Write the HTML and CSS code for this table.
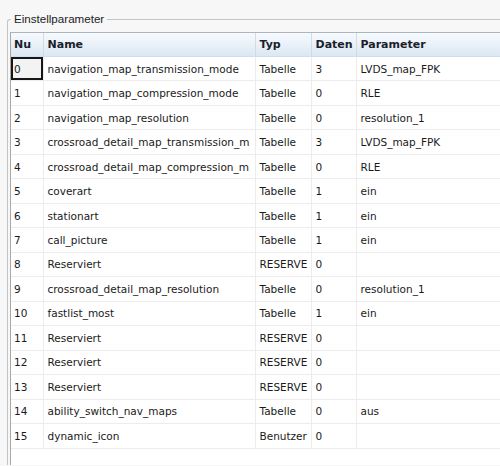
FILE: index.html
```html
<!DOCTYPE html>
<html lang="de">
<head>
<meta charset="utf-8">
<title>Einstellparameter</title>
<link rel="stylesheet" href="styles.css">
</head>
<body>
<fieldset class="group">
  <legend class="group-label">Einstellparameter</legend>
  <div class="grid">
    <table class="param-table">
      <colgroup>
        <col class="c-nu"><col class="c-name"><col class="c-typ"><col class="c-daten"><col class="c-param">
      </colgroup>
      <thead>
        <tr><th class="nu">Nu</th><th>Name</th><th>Typ</th><th>Daten</th><th>Parameter</th></tr>
      </thead>
      <tbody>
        <tr><td class="nu focus">0</td><td>navigation_map_transmission_mode</td><td>Tabelle</td><td>3</td><td>LVDS_map_FPK</td></tr>
        <tr><td class="nu">1</td><td>navigation_map_compression_mode</td><td>Tabelle</td><td>0</td><td>RLE</td></tr>
        <tr><td class="nu">2</td><td>navigation_map_resolution</td><td>Tabelle</td><td>0</td><td>resolution_1</td></tr>
        <tr><td class="nu">3</td><td>crossroad_detail_map_transmission_m</td><td>Tabelle</td><td>3</td><td>LVDS_map_FPK</td></tr>
        <tr><td class="nu">4</td><td>crossroad_detail_map_compression_m</td><td>Tabelle</td><td>0</td><td>RLE</td></tr>
        <tr><td class="nu">5</td><td>coverart</td><td>Tabelle</td><td>1</td><td>ein</td></tr>
        <tr><td class="nu">6</td><td>stationart</td><td>Tabelle</td><td>1</td><td>ein</td></tr>
        <tr><td class="nu">7</td><td>call_picture</td><td>Tabelle</td><td>1</td><td>ein</td></tr>
        <tr><td class="nu">8</td><td>Reserviert</td><td>RESERVE</td><td>0</td><td></td></tr>
        <tr><td class="nu">9</td><td>crossroad_detail_map_resolution</td><td>Tabelle</td><td>0</td><td>resolution_1</td></tr>
        <tr><td class="nu">10</td><td>fastlist_most</td><td>Tabelle</td><td>1</td><td>ein</td></tr>
        <tr><td class="nu">11</td><td>Reserviert</td><td>RESERVE</td><td>0</td><td></td></tr>
        <tr><td class="nu">12</td><td>Reserviert</td><td>RESERVE</td><td>0</td><td></td></tr>
        <tr><td class="nu">13</td><td>Reserviert</td><td>RESERVE</td><td>0</td><td></td></tr>
        <tr><td class="nu">14</td><td>ability_switch_nav_maps</td><td>Tabelle</td><td>0</td><td>aus</td></tr>
        <tr><td class="nu">15</td><td>dynamic_icon</td><td>Benutzer</td><td>0</td><td></td></tr>
      </tbody>
    </table>
  </div>
</fieldset>
</body>
</html>
```
FILE: styles.css
```css
html, body {
  margin: 0;
  padding: 0;
}
body {
  width: 500px;
  height: 466px;
  overflow: hidden;
  background: #f7f7f7;
  font-family: "DejaVu Sans", sans-serif;
  color: #1a1a1a;
}
.group {
  margin: 12px 0 0 7px;
  padding: 6px 0 0 2px;
  width: 493px;
  box-sizing: border-box;
  border: 1px solid #c4c4c4;
  border-right: none;
  border-bottom: none;
  border-radius: 3px 0 0 0;
  min-inline-size: 0;
}
.group-label {
  font-family: "Liberation Sans", sans-serif;
  font-size: 11.6px;
  line-height: 14px;
  padding: 0 3px;
  margin-left: 1px;
  color: #222;
}
.grid {
  background: #fff;
  border-left: 1px solid #a8a8a8;
  border-top: 1px solid #a9b5c2;
  height: 432px;
  overflow: hidden;
}
.param-table {
  border-collapse: collapse;
  table-layout: fixed;
  width: 560px;
}
.c-nu { width: 32px; }
.c-name { width: 212px; }
.c-typ { width: 56px; }
.c-daten { width: 45px; }
.c-param { width: 215px; }
.param-table th {
  height: 23px;
  padding: 0 4px;
  text-align: left;
  font-weight: bold;
  font-size: 11px;
  color: #1a212b;
  background: linear-gradient(#f7fafd, #dbe7f3);
  border-right: 1px solid #cfdbe7;
  border-bottom: 1px solid #d3dde8;
  white-space: nowrap;
  overflow: hidden;
}
.param-table td {
  height: 24.47px;
  box-sizing: border-box;
  padding: 0 4px;
  font-size: 10.5px;
  border-right: 1px solid #ececec;
  border-bottom: 1px solid #ececec;
  white-space: nowrap;
  overflow: hidden;
}
.param-table .nu {
  padding-left: 3px;
}
.param-table td.focus {
  background: #f3f3f3;
  box-shadow: inset 0 0 0 2px #161616;
}
```
